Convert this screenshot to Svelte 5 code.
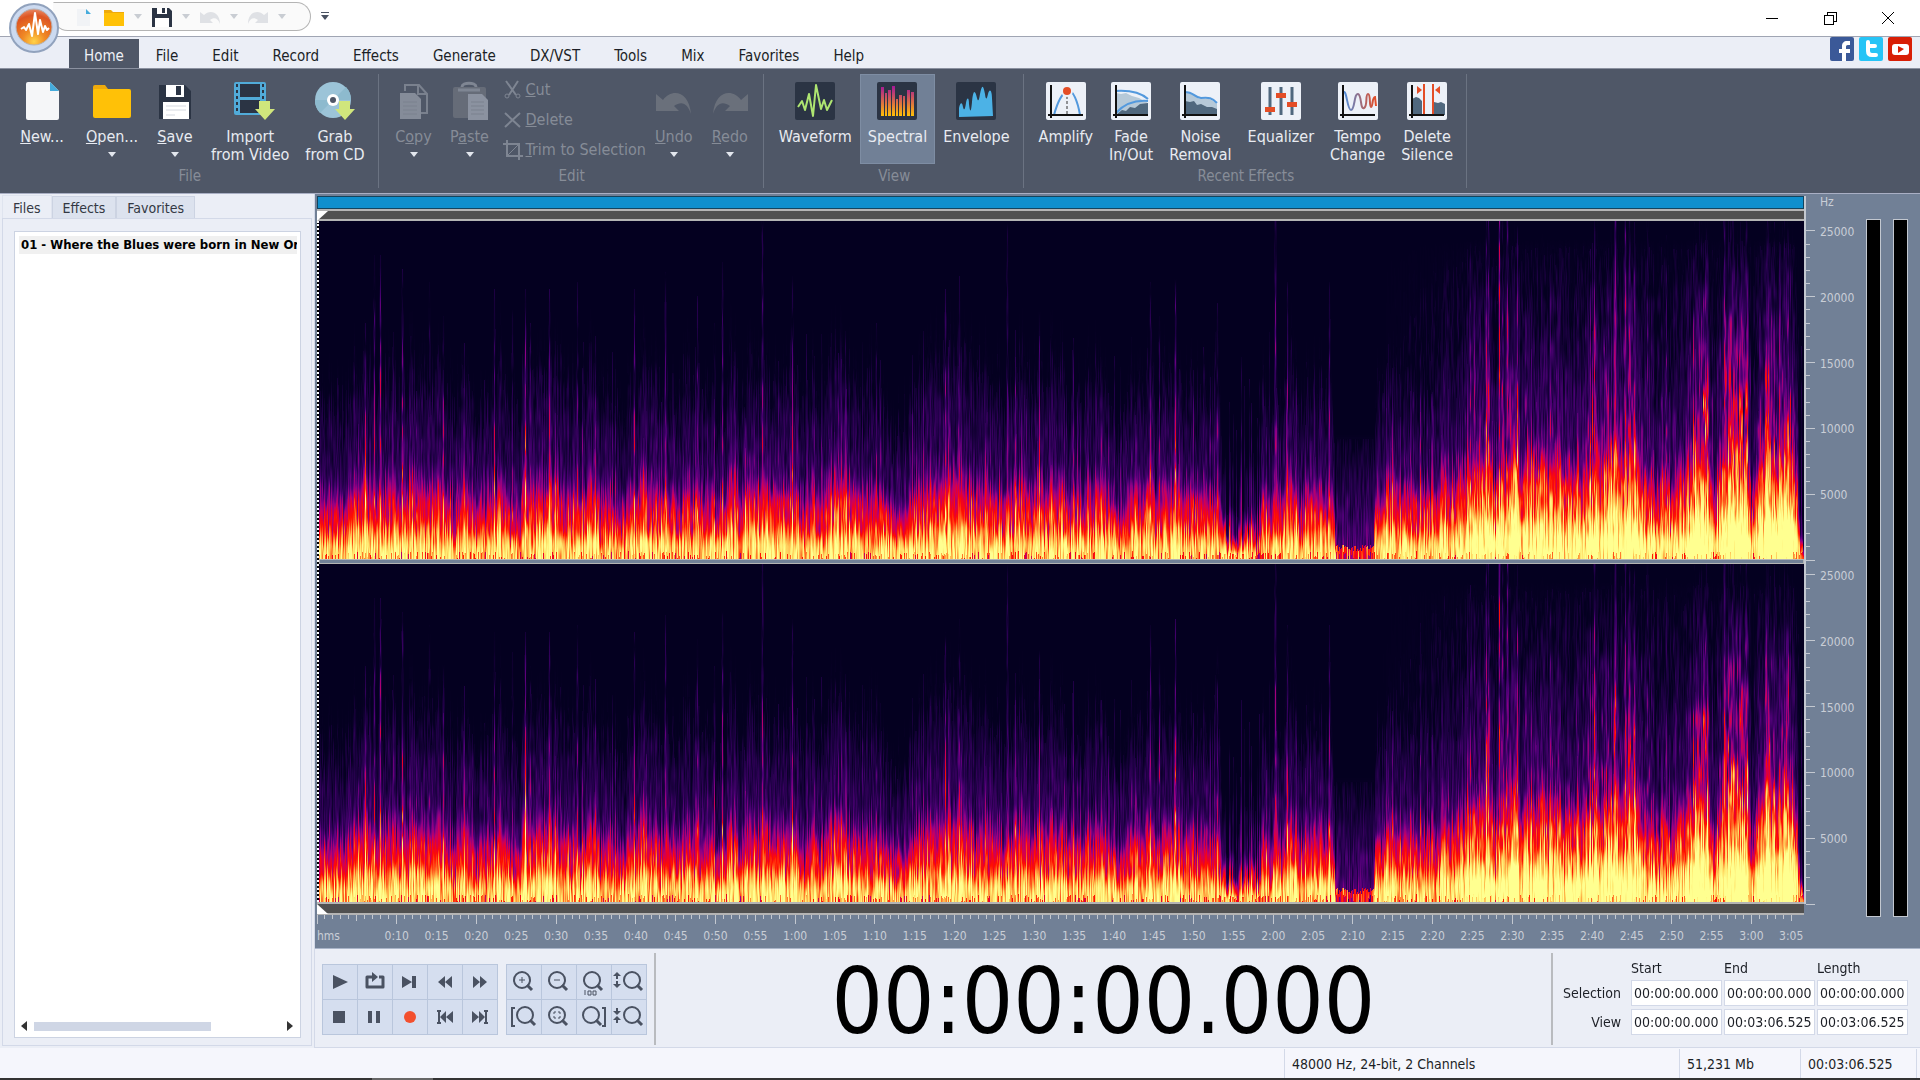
<script>
  const menu = ['Home', 'File', 'Edit', 'Record', 'Effects', 'Generate', 'DX/VST', 'Tools', 'Mix', 'Favorites', 'Help'];

  // "&" marks the accelerator letter, a second line goes after "|"
  const fileTools = [
    { icon: 'new', label: '&New...', wide: true },
    { icon: 'open', label: '&Open...', drop: true, wide: true },
    { icon: 'save', label: '&Save', drop: true },
    { icon: 'video', label: 'Import|from Video' },
    { icon: 'cd', label: 'Grab|from CD' }
  ];
  const clipTools = [
    { icon: 'copy', label: 'C&opy', drop: true, off: true },
    { icon: 'paste', label: 'P&aste', drop: true, off: true }
  ];
  const editLines = [
    { icon: 'cut', label: '&Cut' },
    { icon: 'delete', label: '&Delete' },
    { icon: 'trim', label: '&Trim to Selection' }
  ];
  const undoTools = [
    { icon: 'undo', label: '&Undo', drop: true, off: true },
    { icon: 'redo', label: '&Redo', drop: true, off: true }
  ];
  const viewTools = [
    { icon: 'waveform', label: 'Waveform' },
    { icon: 'spectral', label: 'Spectral', active: true },
    { icon: 'envelope', label: 'Envelope' }
  ];
  const effectTools = [
    { icon: 'amplify', label: 'Amplify' },
    { icon: 'fade', label: 'Fade|In/Out' },
    { icon: 'noise', label: 'Noise|Removal' },
    { icon: 'equalizer', label: 'Equalizer' },
    { icon: 'tempo', label: 'Tempo|Change' },
    { icon: 'silence', label: 'Delete|Silence' }
  ];

  const transport = ['play', 'loop', 'playEnd', 'rewind', 'forward', 'stop', 'pause', 'record', 'toStart', 'toEnd'];
  const zooms = ['zoomIn', 'zoomOut', 'zoom100', 'zoomVertIn', 'zoomLeft', 'zoomSel', 'zoomRight', 'zoomVertOut'];

  let activeTab = 'Home';

  const duration = 186.6;
  const seconds = Array.from({ length: 186 }, (_, i) => i);
  const freqs = Array.from({ length: 26 }, (_, i) => i);

  function formatTime(s) {
    return Math.floor(s / 60) + ':' + String(s % 60).padStart(2, '0');
  }

  function timePos(s) {
    return (s / duration) * 100 + '%';
  }

  function freqPos(khz) {
    return 100 - (khz / 25.75) * 100 + '%';
  }

  function splitLabel(text) {
    const at = text.indexOf('&');
    if (at < 0) return [text, '', ''];
    return [text.slice(0, at), text[at + 1], text.slice(at + 2)];
  }

  /* ---- spectrogram ---- */

  const colors = [
    [0, 4, 0, 32], [0.12, 35, 0, 74], [0.24, 78, 0, 118], [0.34, 142, 0, 134],
    [0.44, 200, 0, 96], [0.52, 236, 0, 40], [0.59, 255, 16, 0], [0.69, 255, 92, 30],
    [0.79, 255, 170, 68], [0.89, 255, 228, 108], [1, 255, 255, 144]
  ];

  // energy by relative frequency for a normal passage
  const falloff = [
    [0, 0.9], [0.04, 0.86], [0.07, 0.74], [0.1, 0.6], [0.14, 0.51], [0.18, 0.41], [0.22, 0.26],
    [0.27, 0.14], [0.36, 0.11], [0.45, 0.07], [0.53, 0.01], [0.6, 0], [9, 0]
  ];

  // position, loudness, high frequency haze
  const loudness = [
    [0, 1, 0], [380, 1, 0], [383, 0.92, 0], [399, 0.92, 0], [403, 1.06, 0], [560, 1.05, 0], [564, 0.88, 0], [596, 0.85, 0],
    [602, 1.1, 0], [780, 1.05, 0], [795, 0.85, 0], [822, 0.85, 0], [828, 1.05, 0],
    [900, 1, 0], [904, 0.6, 0], [937, 0.6, 0], [941, 1.05, 0], [1014, 1, 0],
    [1017, 0.3, 0], [1055, 0.3, 0], [1058, 1.05, 0], [1110, 1.05, 0.04], [1136, 1.3, 0.1],
    [1160, 1.5, 0.3], [1172, 1.5, 0.32], [1175, 1.2, 0.08], [1180, 1.5, 0.26], [1230, 1.36, 0.14],
    [1270, 1.4, 0.22], [1300, 1.5, 0.26], [1345, 1.3, 0.16], [1368, 1.3, 0.14], [1373, 1.6, 0.42],
    [1391, 1.6, 0.42], [1396, 1.3, 0.14], [1404, 1.4, 0.2], [1410, 1.6, 0.4], [1429, 1.6, 0.4],
    [1434, 1.1, 0.06], [1441, 1.5, 0.28], [1447, 1.55, 0.36], [1473, 1.55, 0.3], [1478, 1.4, 0.05], [1482, 0.3, 0], [1486, 0.1, 0]
  ];

  // position, top, strength of the transients
  const spikes = [
    [39, 0.4, 0.3], [46, 0.7, 0.36], [55, 0.9, 0.28], [61, 0.9, 0.46], [83, 0.86, 0.5], [97, 0.5, 0.38], [110, 0.82, 0.22],
    [124, 0.72, 0.34], [175, 0.8, 0.24], [193, 0.74, 0.22], [206, 0.8, 0.42], [211, 0.7, 0.34], [230, 0.8, 0.42],
    [258, 0.82, 0.24], [276, 0.66, 0.26], [315, 0.8, 0.36], [327, 0.44, 0.38], [346, 0.85, 0.32], [378, 0.78, 0.3],
    [395, 0.7, 0.26], [403, 0.88, 0.34], [426, 0.42, 0.4], [443, 1.1, 0.24], [473, 0.84, 0.3], [557, 0.7, 0.3],
    [626, 0.8, 0.42], [640, 0.84, 0.22], [688, 1, 0.24], [696, 0.6, 0.34], [720, 0.76, 0.2], [783, 0.6, 0.24],
    [832, 0.82, 0.44], [841, 0.72, 0.38], [857, 0.84, 0.58], [888, 0.45, 0.36], [899, 0.76, 0.34], [957, 1.15, 0.28],
    [969, 0.82, 0.36], [1011, 0.82, 0.26], [1092, 0.5, 0.42], [1102, 0.8, 0.22], [1152, 0.94, 0.34], [1168, 1.1, 0.3], [1170, 1.1, 0.28],
    [1181, 1.6, 0.34], [1184, 1.1, 0.26], [1189, 1.4, 0.26], [1199, 1, 0.3], [1232, 0.9, 0.24], [1272, 0.92, 0.3], [1276, 1.2, 0.26],
    [1297, 1.4, 0.32], [1307, 1.4, 0.26], [1311, 1.1, 0.24], [1316, 1, 0.24], [1329, 1.1, 0.22], [1348, 0.96, 0.3],
    [1376, 1, 0.1], [1383, 1, 0.1], [1388, 1.1, 0.12], [1406, 1.2, 0.22], [1414, 1.1, 0.1], [1422, 1, 0.1], [1428, 1.2, 0.14],
    [1448, 1, 0.12], [1456, 1, 0.14], [1464, 1, 0.14], [1470, 1, 0.14]
  ];

  function hash(a, b) {
    let h = Math.imul(a + 11, 374761393) ^ Math.imul(b + 7, 668265263);
    h = Math.imul(h ^ (h >>> 13), 1274126177);
    return ((h ^ (h >>> 16)) >>> 0) / 4294967296;
  }

  function lerpTable(table, x, col) {
    let i = 1;
    while (i < table.length - 1 && table[i][0] < x) i++;
    const a = table[i - 1];
    const b = table[i];
    const t = Math.min(1, Math.max(0, (x - a[0]) / (b[0] - a[0])));
    return a[col] + (b[col] - a[col]) * t;
  }

  const palette = Array.from({ length: 256 }, (_, i) =>
    [1, 2, 3].map((c) => Math.round(lerpTable(colors, i / 255, c)))
  );
  const curve = Array.from({ length: 1000 }, (_, i) => lerpTable(falloff, i / 1000, 1));

  // noise that runs smoothly along one column
  function streak(col, y, size, seed) {
    const p = y / size;
    const i = Math.floor(p);
    const t = p - i;
    const s = t * t * (3 - 2 * t);
    return hash(col, i + seed) * (1 - s) + hash(col, i + 1 + seed) * s - 0.5;
  }

  function draw(canvas, seed) {
    const w = canvas.clientWidth;
    const h = canvas.clientHeight;
    if (!w || !h) return;
    canvas.width = w;
    canvas.height = h;
    const ctx = canvas.getContext('2d');
    const image = ctx.createImageData(w, h);

    const peaks = {};
    for (const s of spikes) peaks[Math.round((s[0] / 1486) * w)] = s;

    for (let x = 0; x < w; x++) {
      const pos = (x / w) * 1486;
      const quiet = pos > 1017 && pos < 1055;
      const rnd = hash(x, 1);
      const slow = streak(5, x, 9, 40) + streak(6, x, 4, 90);
      const base = lerpTable(loudness, pos, 1);
      const boost = Math.max(0, base - 1.1) * 0.5;
      let loud = base * (0.96 + (rnd - 0.5) * 0.3 + slow * 0.24);
      if (pos > 904 && pos < 940 && rnd > 0.55) loud *= 0.45;
      const haze = Math.max(0, lerpTable(loudness, pos, 2) * (0.8 + (hash(x, 2) - 0.5) * 1.1 + slow * 0.4));
      const tint = (hash(x, 3) - 0.5) * 0.26 + slow * 0.06;
      const tail = hash(x, 4) > 0.84 ? 0.06 + hash(x, 5) * 0.16 : 0;
      const tailTop = 0.28 + hash(x, 6) * 0.4;
      const floor = 0.004 + hash(x, 9) * 0.02;
      const peak = peaks[x];
      const near = peaks[x - 1] || peaks[x + 1];

      for (let row = 0; row < h; row++) {
        const f = (h - row) / h;
        let v = curve[Math.min(999, Math.floor((f / loud) * 1000))];
        v += boost * Math.min(1, v * 1.5);
        if (quiet) v = f < 0.02 + floor ? 0.62 : Math.max(0, 0.26 - f * 0.7);
        const fine = streak(x, row, 14, seed);
        const wide = streak(x >> 1, row, 26, seed + 500);
        v = Math.max(v, haze * Math.min(1, Math.max(0, 0.95 - f) * 1.6) * (0.95 + wide));
        if (f < tailTop && !quiet) v += tail * (1 - f / tailTop + 0.3) * (1 - v * 0.8);
        if (peak && f < peak[1]) v += peak[2] * Math.min(1, (peak[1] - f) * 1.3 + 0.12) * (1 + fine * 0.7) * (1 - v * 0.8);
        else if (near && f < near[1]) v += near[2] * 0.25 * Math.min(1, (near[1] - f) * 1.4) * Math.max(0, 1 - v);
        if (v > 0.01) v += (fine * 0.26 + wide * 0.16) * Math.min(1, v * 1.1 + 0.3) + tint * Math.min(1, v * 1.6);
        if (f < floor && hash(x, 8) > 0.65) v -= 0.25;
        const c = palette[Math.min(255, Math.max(0, Math.round(v * 255)))];
        const o = (row * w + x) * 4;
        image.data[o] = c[0];
        image.data[o + 1] = c[1];
        image.data[o + 2] = c[2];
        image.data[o + 3] = 255;
      }
    }
    ctx.putImageData(image, 0, 0);
  }

  function spectrogram(canvas, seed) {
    draw(canvas, seed);
    const observer = new ResizeObserver(() => {
      if (canvas.width !== canvas.clientWidth || canvas.height !== canvas.clientHeight) draw(canvas, seed);
    });
    observer.observe(canvas);
    return { destroy: () => observer.disconnect() };
  }
</script>

{#snippet caption(text)}
  {@const parts = splitLabel(text)}
  {parts[0]}{#if parts[1]}<u>{parts[1]}</u>{/if}{parts[2]}
{/snippet}

{#snippet glyph(name)}
  <svg class="glyph" viewBox="0 0 40 38" aria-hidden="true">
    {#if name === 'new'}
      <path d="M6 0h22l9 9v27a2 2 0 0 1-2 2H6a2 2 0 0 1-2-2V2a2 2 0 0 1 2-2z" fill="#f5f6f8" />
      <path d="M28 0l9 9h-9z" fill="#45abdc" />
    {:else if name === 'open'}
      <path d="M1 5a2 2 0 0 1 2-2h10l3 4h20v8H1z" fill="#eeaa0c" />
      <rect x="1" y="7" width="38" height="29" rx="2" fill="#ffc107" />
    {:else if name === 'save'}
      <path d="M4 3h26l6 6v28H4z" fill="#2b3444" />
      <path d="M11 3h18v12H11z" fill="#fff" /><path d="M21 4h5v9h-5z" fill="#2b3444" />
      <path d="M8 20h26v17H8z" fill="#fff" />
      <path d="M11 24h20M11 28h20M11 33h9" stroke="#d5d9e0" />
    {:else if name === 'video'}
      <rect x="4" y="0" width="32" height="33" rx="2" fill="#51abd9" />
      <path d="M10 2h20v13H10zM10 18h20v13H10z" fill="#2b3444" />
      <path d="M7 2v30M33 2v30" stroke="#2b3444" stroke-width="2" stroke-dasharray="3 3" />
      <path d="M29 19h11v8h5l-10 11-10-11h4z" fill="#d0e67c" />
    {:else if name === 'cd'}
      <circle cx="18" cy="18" r="18" fill="#9cc4d8" />
      <path d="M18 18L31 5a18 18 0 0 1 5 13zM18 18L5 31a18 18 0 0 1-5-13z" fill="#8dbace" />
      <circle cx="18" cy="18" r="6" fill="#fff" /><circle cx="18" cy="18" r="3" fill="#4f5767" />
      <path d="M24 19h11v8h5l-10 11-10-11h4z" fill="#d0e67c" />
    {:else if name === 'copy'}
      <path d="M11 9V3h14l8 9v19H22M24 3v9h9" fill="none" stroke="#7a818e" stroke-width="2" />
      <path d="M6 11h15l6 6v20H6z" fill="#858c99" />
      <path d="M9 20h14M9 24h14M9 28h14M9 32h14" stroke="#7a818e" />
    {:else if name === 'paste'}
      <rect x="3" y="5" width="33" height="31" rx="2" fill="#666c78" />
      <path d="M8 8h22M12 5c0-5 14-5 14 0" fill="none" stroke="#7f8693" stroke-width="3" />
      <path d="M18 12h14l6 6v20H18z" fill="#8b92a0" />
      <path d="M21 20h13M21 24h13M21 28h13M21 32h13" stroke="#7a818e" />
    {:else if name === 'undo' || name === 'redo'}
      <path
        d="M2 12l7 6C18 6 35 9 37 32c-3-10-9-14-17-8l5 5H2z"
        fill="#6a707b"
        transform={name === 'redo' ? 'matrix(-1 0 0 1 40 0)' : null}
      />
    {:else}
      <rect width="40" height="38" rx="2" fill={['waveform', 'spectral', 'envelope'].includes(name) ? '#2b3444' : '#edf1f8'} />
      {#if name === 'waveform'}
        <path d="M3 25l4-6 3 9 4-16 4 22 3-31 5 24 3-9 3 10 5-10" fill="none" stroke="#aee571" stroke-width="2" stroke-linejoin="round" />
      {:else if name === 'spectral'}
        <defs>
          <linearGradient id="spec" x1="0" y1="4" x2="0" y2="34" gradientUnits="userSpaceOnUse">
            <stop offset="0" stop-color="#a51899" /><stop offset="0.6" stop-color="#e0783c" /><stop offset="1" stop-color="#ffc107" />
          </linearGradient>
        </defs>
        <path d="M4 5h3v29H4zM8 11h2v23H8zM11 8h3v26h-3zM15 4h3v30h-3zM19 17h2v17h-2zM22 13h3v21h-3zM26 14h2v20h-2zM30 8h3v26h-3zM34 10h3v24h-3z" fill="url(#spec)" />
      {:else if name === 'envelope'}
        <path d="M3 35V26c1-5 3-7 4-1 1 4 2 3 3-4 1-6 3-6 3 1 1 9 2 9 3-2 1-12 3-13 5-4 1 4 2 3 3-4 2-9 3-10 5 0 1 8 2 4 3 0 2-7 4-2 4 4l1 18z" fill="#4cb2e6" />
      {:else if name === 'amplify'}
        <path d="M8 33C11 22 15 12 21 9s11 12 13 24" fill="none" stroke="#5399dd" stroke-width="2" />
        <path d="M21 14v18" stroke="#333" stroke-dasharray="3 2" /><circle cx="21" cy="9" r="6" fill="#edf1f8" /><circle cx="21" cy="9" r="4" fill="#e44d26" />
      {:else if name === 'fade'}
        <path d="M5 11l5 1 5-1 6 3 7 2 9 5v12H5z" fill="#b6c9d8" />
        <path d="M5 33l6-5 4 1 4-4 5 1 5-4 8-1v12z" fill="#50687e" />
        <path d="M4 9c14-1 25 1 33 8M5 31c9-10 19-13 32-12" fill="none" stroke="#5399dd" stroke-width="2" />
      {:else if name === 'noise'}
        <path d="M5 10c11 0 8 6 17 7 8-1 10 1 15 5v11H5z" fill="#b6c9d8" />
        <path d="M5 19l5 1 4-1 3 4 4-1 6 3h5l5 2v6H5z" fill="#50687e" />
        <path d="M4 10c11 0 9 5 17 6 8-1 11 0 16 5" fill="none" stroke="#5399dd" stroke-width="2" />
      {:else if name === 'equalizer'}
        <path d="M9 5v28M20 5v28M31 5v28" stroke="#50687e" stroke-width="3" />
        <path d="M4 25h10v5H4zM15 11h10v5H15zM26 20h10v5H26z" fill="#e44d26" />
      {:else if name === 'tempo'}
        <defs>
          <linearGradient id="tempo"><stop offset="0" stop-color="#4a90e2" /><stop offset="1" stop-color="#e44d26" /></linearGradient>
        </defs>
        <path d="M5 10C9 7 9 28 13 28s3-17 7-16 2 16 6 14 1-14 4-14 1 13 3 13 1-10 4-10l1 9" fill="none" stroke="url(#tempo)" stroke-width="2" />
      {:else if name === 'silence'}
        <path d="M5 17l4-2 3 1 3 3v14H5zM27 20l4 1 3-1 4 2v11H27z" fill="#50687e" />
        <path d="M17 2v31M26 2v31" stroke="#e44d26" stroke-width="2" />
        <path d="M10 4l5 4-5 4zM33 4l-5 4 5 4z" fill="#e44d26" />
      {/if}
      {#if !['waveform', 'spectral', 'envelope', 'equalizer'].includes(name)}
        <path d="M5 3v33M2 33h35" stroke="#111" stroke-width="2" />
      {/if}
    {/if}
  </svg>
{/snippet}

{#snippet tools(list)}
  {#each list as tool}
    <button class="tool" class:active={tool.active} class:off={tool.off} class:wide={tool.wide}>
      {@render glyph(tool.icon)}
      {#each tool.label.split('|') as line}
        <span>{@render caption(line)}</span>
      {/each}
      {#if tool.drop}<i class="arrow"></i>{/if}
    </button>
  {/each}
{/snippet}

{#snippet control(name)}
  <svg viewBox="0 0 34 34" aria-hidden="true">
    {#if name === 'play'}<path d="M10 10l15 7-15 7z" />
    {:else if name === 'loop'}<path d="M14 12H9v10h16V12h-4" fill="none" stroke="#4a5262" stroke-width="3" stroke-linejoin="round" /><path d="M14 7l6 5-6 5z" />
    {:else if name === 'playEnd'}<path d="M9 11l10 6-10 6zM19 11h4v12h-4z" />
    {:else if name === 'rewind'}<path d="M17 11v12l-7-6zM24 11v12l-7-6z" />
    {:else if name === 'forward'}<path d="M10 11v12l7-6zM17 11v12l7-6z" />
    {:else if name === 'stop'}<path d="M10 11h12v12H10z" />
    {:else if name === 'pause'}<path d="M10 11h4v12h-4zM18 11h4v12h-4z" />
    {:else if name === 'record'}<circle cx="17" cy="17" r="6" fill="#f3502e" />
    {:else if name === 'toStart'}<path d="M9 10h4v2h-1v10h1v2H9v-2h1V12H9zM18 11v12l-6-6zM25 11v12l-7-6z" />
    {:else if name === 'toEnd'}<path d="M21 10h4v2h-1v10h1v2h-4v-2h1V12h-1zM9 11v12l7-6zM16 11v12l6-6z" />
    {:else}
      {@const dx = name === 'zoomLeft' ? 3 : name === 'zoomRight' ? -1 : name.startsWith('zoomVert') ? 5 : 0}
      <g fill="none" stroke="#4a5262" stroke-width="2" transform="translate({dx} 0)">
        <circle cx="15" cy="15" r="8" />
        <path d="M20 20l5 5" stroke-width="3" />
        {#if name === 'zoomIn'}<path d="M12 15h6M15 12v6" stroke-width="1" />
        {:else if name === 'zoomOut'}<path d="M12 15h6" stroke-width="1" />
        {:else if name === 'zoomSel'}<path d="M12 14v-2h2M16 12h2v2M18 16v2h-2M14 18h-2v-2" stroke-width="1" />
        {/if}
      </g>
      {#if name === 'zoom100'}<path d="M8 25v5M11 26h3v4h-3zM16 26h3v4h-3z" fill="none" stroke="#4a5262" />
      {:else if name === 'zoomLeft'}<path d="M8 8H5v18h3" fill="none" stroke="#4a5262" stroke-width="2" />
      {:else if name === 'zoomRight'}<path d="M25 8h3v18h-3" fill="none" stroke="#4a5262" stroke-width="2" />
      {:else if name === 'zoomVertIn'}<path d="M5 7l4 4H6v3H4v-3H1zM5 23l4-4H6v-3H4v3H1z" />
      {:else if name === 'zoomVertOut'}<path d="M5 15l4-4H6V8H4v3H1zM5 16l4 4H6v3H4v-3H1z" />
      {/if}
    {/if}
  </svg>
{/snippet}

<div class="app">
  <header class="titlebar">
    <button class="logo" aria-label="Application menu">
      <svg viewBox="0 0 50 50">
        <defs>
          <radialGradient id="ball" cx="0.5" cy="0.9" r="0.9">
            <stop offset="0" stop-color="#ffd34a" /><stop offset="0.35" stop-color="#f08a25" /><stop offset="0.8" stop-color="#dd5522" /><stop offset="1" stop-color="#e88a66" />
          </radialGradient>
        </defs>
        <circle cx="25" cy="25" r="24" fill="#ccdaf0" stroke="#91a2bd" stroke-width="2" />
        <circle cx="25" cy="24" r="18" fill="url(#ball)" stroke="#b5b4b8" />
        <path d="M12 26l3-2 2 3 3-6 3 12 3-23 3 21 2-14 3 12 2-6 2 4 2-2" fill="none" stroke="#fff" stroke-width="2" stroke-linejoin="round" />
      </svg>
    </button>
    <div class="quick">
      <button aria-label="New"><svg viewBox="0 0 20 20"><path d="M3 2h9l4 4v13H3z" fill="#f1f3f6" /><path d="M12 2l5 5h-5z" fill="#45abdc" /></svg></button>
      <button aria-label="Open"><svg viewBox="0 0 20 20"><path d="M0 3h7l2 2h11v13H0z" fill="#eeaa0c" /><path d="M0 6h20v13H0z" fill="#ffc107" /></svg></button>
      <i class="arrow"></i>
      <button aria-label="Save"><svg viewBox="0 0 20 20"><path d="M0 1h17l3 3v16H0z" fill="#2b3444" /><path d="M5 1h10v6H5zM3 11h14v9H3z" fill="#fff" /><path d="M10 1h3v5h-3z" fill="#2b3444" /></svg></button>
      <i class="arrow"></i>
      <button aria-label="Undo"><svg viewBox="0 0 20 20"><path d="M0 5l4 3c6-6 16-3 16 9-2-6-6-7-10-4l3 3H0z" fill="#dfe1e5" /></svg></button>
      <i class="arrow"></i>
      <button aria-label="Redo"><svg viewBox="0 0 20 20"><path d="M20 5l-4 3C10 2 0 5 0 17c2-6 6-7 10-4l-3 3h13z" fill="#dfe1e5" /></svg></button>
      <i class="arrow"></i>
    </div>
    <button class="customize" aria-label="Customize toolbar"><i class="arrow dark"></i></button>
    <div class="window-buttons">
      <button aria-label="Minimize"><svg viewBox="0 0 14 14"><path d="M1 7h12" /></svg></button>
      <button aria-label="Restore"><svg viewBox="0 0 14 14"><path d="M1 4h9v9H1zM4 4V1h9v9h-3" /></svg></button>
      <button aria-label="Close"><svg viewBox="0 0 14 14"><path d="M1 1l12 12M13 1L1 13" /></svg></button>
    </div>
  </header>

  <nav class="menu">
    {#each menu as item}
      <button class:active={item === activeTab} on:click={() => (activeTab = item)}>{item}</button>
    {/each}
    <div class="social">
      <a href="#facebook" aria-label="Facebook"><svg viewBox="0 0 24 24"><rect width="24" height="24" rx="2" fill="#3b5998" /><path d="M20 4v4h-2c-2 0-2 1-2 2v2h4v4h-4v8h-4v-8H9v-4h3V9c0-3 2-5 5-5z" fill="#fff" /></svg></a>
      <a href="#twitter" aria-label="Twitter"><svg viewBox="0 0 24 24"><rect width="24" height="24" rx="2" fill="#26c4f6" /><path d="M9 5v4h7M9 9v5c0 3 2 4 4 4h4" fill="none" stroke="#fff" stroke-width="4" stroke-linecap="round" stroke-linejoin="round" /></svg></a>
      <a href="#youtube" aria-label="YouTube"><svg viewBox="0 0 24 24"><rect width="24" height="24" rx="2" fill="#d81f06" /><rect x="4" y="7" width="17" height="11" rx="3" fill="#fff" /><path d="M10 9l6 3-6 4z" fill="#d81f06" /></svg></a>
    </div>
  </nav>

  <div class="ribbon">
    <section class="group">
      <div class="tools">{@render tools(fileTools)}</div>
      <h2>File</h2>
    </section>
    <section class="group">
      <div class="tools">
        {@render tools(clipTools)}
        <div class="lines">
          {#each editLines as line}
            <button>
              <svg viewBox="0 0 20 20" aria-hidden="true">
                {#if line.icon === 'cut'}
                  <path d="M3 1l10 14M15 1L6 15" stroke-width="2" /><circle cx="4" cy="16" r="2" /><circle cx="15" cy="16" r="2" />
                {:else if line.icon === 'delete'}
                  <path d="M2 3l15 14M17 3L2 17" stroke-width="2" />
                {:else}
                  <path d="M0 4h16v16M4 0v16h16" stroke-width="2" /><path d="M5 15L15 5" />
                {/if}
              </svg>
              <span>{@render caption(line.label)}</span>
            </button>
          {/each}
        </div>
        {@render tools(undoTools)}
      </div>
      <h2>Edit</h2>
    </section>
    <section class="group">
      <div class="tools">{@render tools(viewTools)}</div>
      <h2>View</h2>
    </section>
    <section class="group">
      <div class="tools">{@render tools(effectTools)}</div>
      <h2>Recent Effects</h2>
    </section>
  </div>

  <div class="workspace">
    <aside>
      <div class="side-tabs">
        <button class="active">Files</button>
        <button>Effects</button>
        <button>Favorites</button>
      </div>
      <div class="pane">
        <div class="list">
          <ul>
            <li>01 - Where the Blues were born in New Orleans</li>
          </ul>
          <div class="scroll">
            <button class="prev" aria-label="Scroll left"></button>
            <div class="track"><div class="thumb"></div></div>
            <button class="next" aria-label="Scroll right"></button>
          </div>
        </div>
      </div>
    </aside>

    <main>
      <div class="editor">
        <div class="waves">
          <div class="overview"></div>
          <div class="marker-bar top"></div>
          <div class="channels">
            <canvas use:spectrogram={1}></canvas>
            <div class="divider"></div>
            <canvas use:spectrogram={77}></canvas>
          </div>
          <div class="marker-bar bottom"></div>
          <svg class="time-ruler">
            {#each seconds as s}
              <line x1={timePos(s)} x2={timePos(s)} y1="0" y2={s % 10 === 0 ? 9 : s % 5 === 0 ? 6 : 4} />
              {#if s >= 10 && s % 5 === 0}
                <text x={timePos(s)} y="25" text-anchor="middle">{formatTime(s)}</text>
              {/if}
            {/each}
            <text x="0" y="25">hms</text>
          </svg>
        </div>

        <div class="scale">
          <div class="unit">Hz</div>
          {#each [1, 2] as channel (channel)}
            <svg class="freq-ruler">
              {#each freqs as khz}
                <line x1="0" x2={khz % 5 === 0 ? 9 : 4} y1={freqPos(khz)} y2={freqPos(khz)} />
                {#if khz && khz % 5 === 0}
                  <text x="14" y={freqPos(khz)} dy="5">{khz * 1000}</text>
                {/if}
              {/each}
            </svg>
          {/each}
        </div>

        <div class="meters">
          <div></div>
          <div></div>
        </div>
      </div>

      <footer class="controls">
        <div class="pads">
          <div class="pad five">
            {#each transport as name}
              <button aria-label={name}>{@render control(name)}</button>
            {/each}
          </div>
          <div class="pad four">
            {#each zooms as name}
              <button aria-label={name}>{@render control(name)}</button>
            {/each}
          </div>
        </div>
        <div class="clock">00:00:00.000</div>
        <div class="ranges">
          <span></span><span>Start</span><span>End</span><span>Length</span>
          <label for="sel-start">Selection</label>
          <input id="sel-start" value="00:00:00.000" />
          <input aria-label="Selection end" value="00:00:00.000" />
          <input aria-label="Selection length" value="00:00:00.000" />
          <label for="view-start">View</label>
          <input id="view-start" value="00:00:00.000" />
          <input aria-label="View end" value="00:03:06.525" />
          <input aria-label="View length" value="00:03:06.525" />
        </div>
      </footer>
    </main>
  </div>

  <div class="status">
    <span class="format">48000 Hz, 24-bit, 2 Channels</span>
    <span class="size">51,231 Mb</span>
    <span class="length">00:03:06.525</span>
  </div>
  <div class="edge"></div>
</div>

<style>
  :global(body) {
    margin: 0;
  }

  .app {
    display: flex;
    flex-direction: column;
    height: 100vh;
    min-height: 640px;
    overflow: hidden;
    background: #ebeef6;
    color: #1c1f26;
    font-family: 'DejaVu Sans Condensed', 'DejaVu Sans', sans-serif;
    font-size: 14px;
    line-height: 18px;
  }

  button {
    margin: 0;
    padding: 0;
    border: 0;
    background: none;
    color: inherit;
    font: inherit;
  }

  svg {
    display: block;
  }

  .arrow {
    width: 0;
    height: 0;
    border: 4px solid transparent;
    border-top: 5px solid #e3e7ee;
    border-bottom: 0;
  }

  /* Title bar */
  .titlebar {
    position: relative;
    display: flex;
    align-items: flex-start;
    height: 36px;
    background: #fff;
    border-bottom: 1px solid #a0a5b3;
  }

  .logo {
    position: absolute;
    left: 9px;
    top: 3px;
    z-index: 1;
    width: 50px;
    height: 50px;
  }

  .quick {
    display: flex;
    align-items: center;
    gap: 10px;
    height: 27px;
    margin: 2px 0 0 53px;
    padding: 0 24px 0 20px;
    border: 1px solid #b4b4b4;
    border-left-color: transparent;
    border-radius: 0 16px 16px 16px;
    background: #fafafa;
  }

  .quick svg {
    width: 20px;
    height: 20px;
  }

  .quick .arrow {
    border-top-color: #c9cdd3;
  }

  .customize {
    margin: 12px 0 0 10px;
    padding-top: 2px;
    border-top: 1px solid #4a5262;
  }

  .arrow.dark {
    display: block;
    border-top-color: #4a5262;
  }

  .window-buttons {
    display: flex;
    gap: 44px;
    margin: 11px 25px 0 auto;
  }

  .window-buttons svg {
    width: 14px;
    height: 14px;
    fill: none;
    stroke: #000;
    shape-rendering: crispEdges;
  }

  /* Menu */
  .menu {
    display: flex;
    align-items: stretch;
    height: 31px;
    padding-left: 69px;
    background: #ebeef6;
    font-size: 15px;
  }

  .menu button {
    margin-top: 2px;
    padding: 5px 17px 0;
  }

  .menu button.active {
    padding: 5px 15px 0;
    background: #4f5767;
    color: #eef1f6;
  }

  .social {
    display: flex;
    gap: 5px;
    margin: 0 8px 0 auto;
  }

  .social svg {
    width: 24px;
    height: 24px;
  }

  /* Ribbon */
  .ribbon {
    display: flex;
    height: 124px;
    background: #4f5767;
    border-top: 1px solid #8b91a0;
    border-bottom: 1px solid #a9afc4;
    color: #e8ebf1;
    font-size: 16px;
  }

  .group {
    display: flex;
    flex-direction: column;
    justify-content: space-between;
    margin: 5px 0 5px;
    padding: 0 5px 0 7px;
    border-right: 1px solid #6b7382;
  }

  .tools {
    display: flex;
  }

  .group h2 {
    margin: 0 0 3px;
    color: #878d98;
    font-size: 15px;
    font-weight: normal;
    text-align: center;
  }

  .tool {
    display: flex;
    flex-direction: column;
    align-items: center;
    height: 90px;
    padding: 7px 7px 0;
    border: 1px solid transparent;
  }

  .tool.wide {
    min-width: 70px;
  }

  .tool.active {
    background: #718096;
    border-color: #7e8da3;
  }

  .tool.off,
  .lines {
    color: #868c97;
  }

  .glyph {
    width: 40px;
    height: 38px;
    margin-bottom: 8px;
    overflow: visible;
  }

  .tool .arrow {
    margin-top: 6px;
  }

  .lines {
    display: flex;
    flex-direction: column;
    gap: 10px;
    padding: 6px 0 0 5px;
  }

  .lines button {
    display: flex;
    align-items: center;
    gap: 3px;
    height: 20px;
  }

  .lines svg {
    width: 20px;
    height: 20px;
    fill: none;
    stroke: #7e8592;
  }

  /* Side panel */
  .workspace {
    display: flex;
    flex: 1;
    min-height: 0;
  }

  aside {
    display: flex;
    flex-direction: column;
    flex: 0 0 315px;
    box-sizing: border-box;
    min-width: 0;
    padding: 1px 2px 2px;
    border-right: 1px solid #d3d9e8;
  }

  .side-tabs {
    display: flex;
    align-items: flex-end;
  }

  .side-tabs button {
    height: 22px;
    padding: 0 10px;
    border: 1px solid #ccd3e2;
    border-bottom: 0;
    background: #dce2ee;
    color: #333843;
  }

  .side-tabs button.active {
    height: 24px;
    margin-bottom: -1px;
    background: #ebeef6;
    border-color: #dfe4ef;
  }

  .pane {
    display: flex;
    flex: 1;
    padding: 12px 10px 7px 11px;
    border: 1px solid #d3d9e8;
    min-height: 0;
  }

  .list {
    display: flex;
    flex: 1;
    flex-direction: column;
    justify-content: space-between;
    min-width: 0;
    padding: 4px 3px 6px 4px;
    border: 1px solid #ccd3e2;
    background: #fff;
  }

  .list ul {
    margin: 0;
    padding: 0;
    list-style: none;
  }

  .list li {
    overflow: hidden;
    padding-left: 2px;
    background: #f0f0f0;
    color: #000;
    font-size: 13px;
    font-weight: bold;
    white-space: nowrap;
  }

  .scroll {
    display: flex;
    align-items: center;
    gap: 7px;
    padding: 0 4px 0 2px;
  }

  .track {
    flex: 1;
  }

  .thumb {
    width: 72%;
    height: 9px;
    background: #cfd6e5;
  }

  .prev,
  .next {
    border: 5px solid transparent;
  }

  .prev {
    border-left: 0;
    border-right: 6px solid #333;
  }

  .next {
    border-right: 0;
    border-left: 6px solid #333;
  }

  /* Editor */
  main {
    display: flex;
    flex: 1;
    flex-direction: column;
    min-width: 0;
  }

  .editor {
    display: flex;
    flex: 1;
    min-height: 0;
    padding: 2px 0 0 2px;
    border-bottom: 1px solid #a9b4c8;
    background: #718096;
  }

  .waves {
    display: flex;
    flex: 1;
    flex-direction: column;
    min-width: 0;
  }

  .overview {
    height: 11px;
    border: 1px solid #14445e;
    background: #0f8fcd;
  }

  .marker-bar {
    height: 8px;
    border-top: 2px solid #b4b4b4;
    border-bottom: 2px solid #b4b4b4;
    background: #505050;
  }

  .marker-bar::before {
    content: '';
    display: block;
    width: 11px;
    height: 10px;
    background: #fff;
    clip-path: polygon(0 0, 100% 0, 0 100%);
  }

  .marker-bar.bottom {
    height: 9px;
  }

  .marker-bar.bottom::before {
    clip-path: polygon(0 0, 100% 100%, 0 100%);
  }

  .channels {
    display: flex;
    flex: 1;
    flex-direction: column;
    min-height: 0;
    border-left: 2px dotted #fff;
    background: #000;
  }

  canvas {
    display: block;
    flex: 1 1 0;
    width: 100%;
    min-height: 0;
  }

  .divider {
    height: 3px;
    border: 1px solid #b4b4b4;
    background: #718096;
  }

  .time-ruler {
    width: 100%;
    height: 33px;
    overflow: visible;
  }

  .time-ruler line,
  .freq-ruler line {
    stroke: #c3c8d0;
    shape-rendering: crispEdges;
  }

  .time-ruler text,
  .freq-ruler text,
  .unit {
    fill: #c9ced6;
    color: #c9ced6;
    font-size: 12px;
  }

  .scale {
    display: flex;
    flex: 0 0 60px;
    flex-direction: column;
    margin-bottom: 44px;
    border-left: 2px solid #c3c8d0;
    gap: 5px;
  }

  .unit {
    height: 19px;
    padding: 0 0 1px 14px;
    line-height: 12px;
  }

  .freq-ruler {
    flex: 1 1 0;
    width: 100%;
    min-height: 0;
    overflow: visible;
  }

  .meters {
    display: flex;
    flex: 0 0 54px;
    gap: 12px;
    margin: 23px 0 31px;
  }

  .meters div {
    width: 13px;
    border: 1px solid #c3c8d0;
    background: #000;
  }

  /* Bottom controls */
  .controls {
    display: flex;
    padding: 4px 12px 2px 7px;
    border-bottom: 1px solid #d3d9e8;
  }

  .pads {
    display: flex;
    gap: 8px;
    align-items: flex-start;
    padding: 11px 7px 0 0;
    border-right: 2px solid #b9bbbf;
  }

  .pad {
    display: grid;
    gap: 1px;
    padding: 1px;
    background: #b9c6dc;
  }

  .five {
    grid-template-columns: repeat(5, 34px);
  }

  .four {
    grid-template-columns: repeat(4, 34px);
  }

  .pad button {
    height: 34px;
    background: #d5deef;
  }

  .pad svg {
    width: 34px;
    height: 34px;
    fill: #4a5262;
  }

  .clock {
    flex: 1;
    padding-top: 6px;
    color: #000;
    font-size: 90px;
    line-height: 86px;
    text-align: center;
  }

  .ranges {
    display: grid;
    grid-template-columns: auto repeat(3, 91px);
    grid-template-rows: 18px 26px 26px;
    column-gap: 2px;
    row-gap: 3px;
    align-content: start;
    align-items: center;
    padding: 6px 0 0 10px;
    border-left: 2px solid #b9bbbf;
  }

  .ranges label {
    padding-right: 8px;
    text-align: right;
  }

  .ranges input {
    box-sizing: border-box;
    width: 100%;
    height: 26px;
    padding: 0 2px;
    border: 1px solid #d3d9e8;
    background: #fff;
    color: #1c1f26;
    font: inherit;
  }

  /* Status bar */
  .status {
    display: flex;
    justify-content: flex-end;
    height: 29px;
    padding: 1px 3px 0 0;
    background: #f5f6fc;
    line-height: 30px;
  }

  .status span {
    box-sizing: border-box;
    padding-left: 7px;
    border-left: 1px solid #d3d9e8;
  }

  .format {
    width: 395px;
  }

  .size {
    width: 121px;
  }

  .length {
    width: 117px;
    border-right: 1px solid #d3d9e8;
  }

  .edge {
    height: 2px;
    background: linear-gradient(to right, #333 372px, #666 372px, #666 433px, #333 433px);
  }
</style>
